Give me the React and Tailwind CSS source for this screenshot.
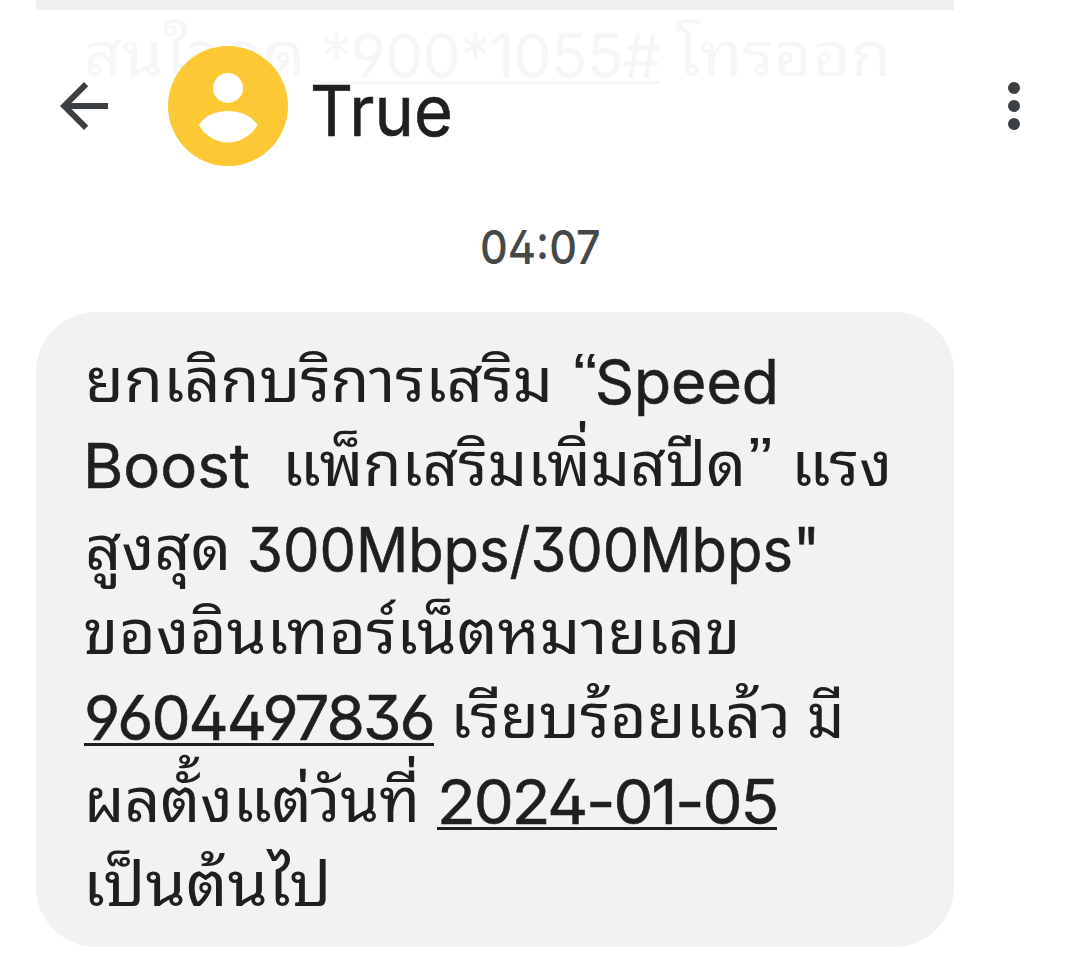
import React, { useLayoutEffect, useRef, useState } from "react";

const FONT =
  "font-['Inter','Noto_Sans_Thai_Looped','Noto_Looped_Thai','Loma','Garuda','Waree','Umpush','Tlwg_Typo','Norasi','Kinnari','Noto_Sans_Thai',sans-serif]";

const earlier = [
  { text: "สนใจกด", start: 84, end: 306, thai: true },
  { text: "*900*1055#", start: 321, end: 660, link: true, plain: true },
  { text: "โทรออก", start: 676, end: 891, thai: true },
];

const message = [
  [
    { text: "ยกเลิกบริการเสริม", start: 85, end: 553, thai: true },
    { text: "“", start: 573, end: 598, quote: true },
    { text: "Speed", start: 595, end: 779 },
  ],
  [
    { text: "Boost", start: 83, end: 250 },
    { text: "แพ็กเสริมเพิ่มสปีด", start: 282, end: 746, thai: true },
    { text: "”", start: 748, end: 773, quote: true },
    { text: "แรง", start: 791, end: 892, thai: true },
  ],
  [
    { text: "สูงสุด", start: 85, end: 231, thai: true },
    { text: '300Mbps/300Mbps"', start: 247, end: 820 },
  ],
  [{ text: "ของอินเทอร์เน็ตหมายเลข", start: 83, end: 741, thai: true }],
  [
    { text: "9604497836", start: 84, end: 434, link: true },
    { text: "เรียบร้อยแล้ว", start: 450, end: 791, thai: true },
    { text: "มี", start: 807, end: 844, thai: true },
  ],
  [
    { text: "ผลตั้งแต่วันที่", start: 84, end: 420, thai: true },
    { text: "2024-01-05", start: 437, end: 777, link: true },
  ],
  [{ text: "เป็นต้นไป", start: 83, end: 332, thai: true }],
];

// Squeezes or stretches a run of text so that it fills its slot
const Fit = ({ text, width, className = "" }) => {
  const ref = useRef(null);
  const [scale, setScale] = useState(1);

  useLayoutEffect(() => {
    const natural = ref.current.offsetWidth;
    if (natural) setScale(width / natural);
  }, [text, width]);

  return (
    <span className={`block shrink-0 whitespace-pre ${className}`} style={{ width }}>
      <span
        ref={ref}
        className="inline-block origin-left"
        style={{ transform: `scaleX(${scale})` }}
      >
        {text}
      </span>
    </span>
  );
};

const runClass = (r) => {
  if (r.plain) return "mt-[5px] h-[70px] border-b-[3px] border-[#1f1f1f] tracking-[-1px] [font-feature-settings:'ss01','calt'_0]";
  if (r.link) return "mt-[5px] h-[70px] border-b-[3px] border-[#1f1f1f] tracking-[-2px] [-webkit-text-stroke:0.6px_#1f1f1f]";
  if (r.quote) return "-mt-[2px] font-['Liberation_Sans',sans-serif]";
  if (r.thai) return "mt-[3px]";
  return "mt-[5px] [-webkit-text-stroke:0.6px_#1f1f1f]";
};

const Line = ({ runs }) => (
  <div className="flex h-[84px] text-[62px] leading-[84px] text-[#1f1f1f]">
    {runs.map((r, i) => {
      const prev = i === 0 ? 36 : runs[i - 1].end;
      return (
        <div key={r.text} className="shrink-0" style={{ marginLeft: r.start - prev }}>
          <Fit text={r.text} width={r.end - r.start} className={runClass(r)} />
        </div>
      );
    })}
  </div>
);

const Header = () => (
  <header className="absolute inset-x-0 top-[10px] flex h-[192px] items-start bg-white/96 pt-[36px] pl-12">
    <svg viewBox="0 0 24 24" className="mt-6 size-[72px] fill-[#3c4043]">
      <path d="M20 11H7.83l5.59-5.59L12 4l-8 8 8 8 1.41-1.41L7.83 13H20v-2z" />
    </svg>
    <svg viewBox="0 0 120 120" className="ml-12 size-[120px]">
      <circle cx="60" cy="60" r="60" fill="#fcc934" />
      <circle cx="60" cy="42" r="15" fill="#fff" />
      <path d="M31 79C36 70 48 65 60 65S84 70 89.500 79C83 90 72 96.500 60 96.500S37 90 31 79z" fill="#fff" />
    </svg>
    <h1 className="ml-[22px] h-[120px] text-[70px] leading-[129px] text-[#1f1f1f] [-webkit-text-stroke:0.6px_#1f1f1f]">
      <Fit text="True" width={143} />
    </h1>
    <svg viewBox="0 0 24 24" className="mt-6 mr-[30px] ml-auto size-[72px] fill-[#3c4043]">
      <circle cx="12" cy="6" r="2" />
      <circle cx="12" cy="12" r="2" />
      <circle cx="12" cy="18" r="2" />
    </svg>
  </header>
);

export default function App() {
  return (
    <div
      className={`relative h-[978px] w-[1080px] overflow-hidden bg-white [font-feature-settings:'ss01'] ${FONT}`}
    >
      <div className="ml-9 h-[117px] w-[918px] rounded-b-[60px] bg-[#f0f0f0] pt-[9px]">
        <Line runs={earlier} />
      </div>
      <div className="flex h-[195px] justify-center pt-[100px] text-[47px] leading-[60px] font-medium text-[#474949]">
        <Fit text="04:07" width={121} />
      </div>
      <div className="ml-9 h-[635px] w-[918px] rounded-[60px] bg-[#f2f2f2] pt-[23px]">
        {message.map((runs) => (
          <Line key={runs[0].text} runs={runs} />
        ))}
      </div>
      <Header />
    </div>
  );
}
